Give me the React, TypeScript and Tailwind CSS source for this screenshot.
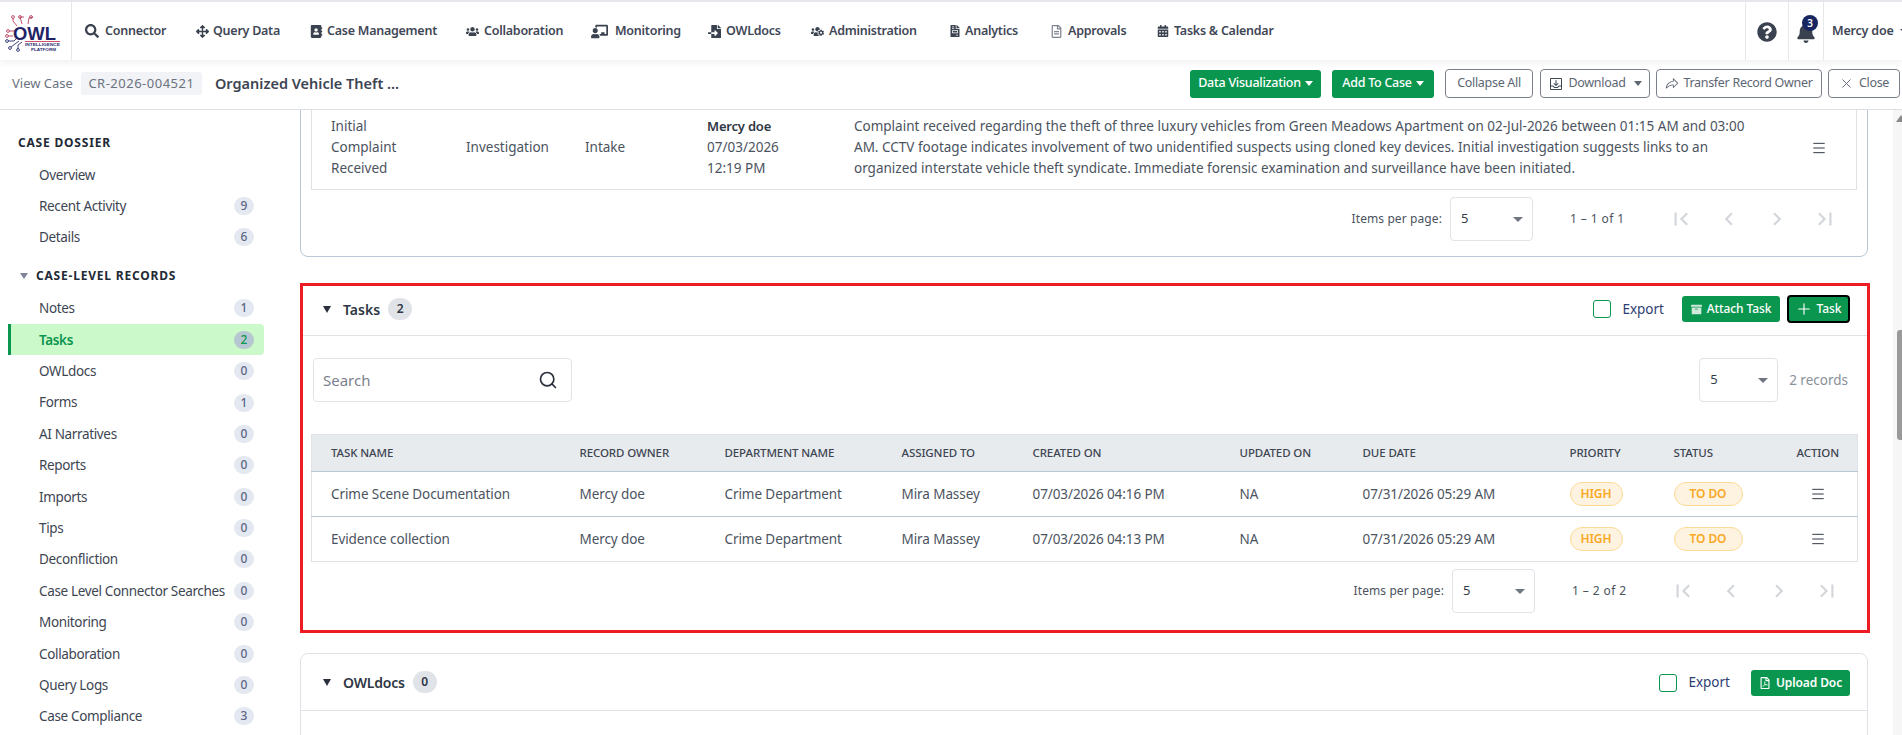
import { Menu, Plus, Search, X } from "lucide-react";
import {
  FaAddressBook,
  FaArchive,
  FaArrowsAlt,
  FaBell,
  FaCalendarAlt,
  FaChalkboardTeacher,
  FaFileImport,
  FaFileInvoice,
  FaQuestionCircle,
  FaRegFileAlt,
  FaRegFilePdf,
  FaSearch,
  FaUsers,
  FaUsersCog,
} from "react-icons/fa";
import { MdChevronLeft, MdChevronRight, MdFirstPage, MdLastPage } from "react-icons/md";
import { PiShareFat, PiTrayArrowDown } from "react-icons/pi";

const navItems = [
  { label: "Connector", icon: FaSearch, width: "w-[110px]", gap: "gap-[6px]", size: 14, tone: "text-[#3a424f]" },
  { label: "Query Data", icon: FaArrowsAlt, width: "w-[114px]", gap: "gap-[4px]", size: 13, tone: "text-[#3a424f]" },
  { label: "Case Management", icon: FaAddressBook, width: "w-[156px]", gap: "gap-[4px]", size: 13, tone: "text-[#3a424f]" },
  { label: "Collaboration", icon: FaUsers, width: "w-[127px]", gap: "gap-[5px]", size: 13, tone: "text-[#3a424f]" },
  { label: "Monitoring", icon: FaChalkboardTeacher, width: "w-[115px]", gap: "gap-[9px]", size: 17, tone: "text-[#3a424f]" },
  { label: "OWLdocs", icon: FaFileImport, width: "w-[103px]", gap: "gap-[5px]", size: 13, tone: "text-[#3a424f]" },
  { label: "Administration", icon: FaUsersCog, width: "w-[138px]", gap: "gap-[5px]", size: 13, tone: "text-[#3a424f]" },
  { label: "Analytics", icon: FaFileInvoice, width: "w-[101px]", gap: "gap-[3px]", size: 12, tone: "text-[#3a424f]" },
  { label: "Approvals", icon: FaRegFileAlt, width: "w-[107px]", gap: "gap-[5px]", size: 13, tone: "text-[#7d8490]" },
  { label: "Tasks & Calendar", icon: FaCalendarAlt, width: "w-[119px]", gap: "gap-[4px]", size: 12, tone: "text-[#3a424f]" },
];

const dossier = [
  { label: "Overview" },
  { label: "Recent Activity", count: 9 },
  { label: "Details", count: 6 },
];

const records = [
  { label: "Notes", count: 1 },
  { label: "Tasks", count: 2, active: true },
  { label: "OWLdocs", count: 0 },
  { label: "Forms", count: 1 },
  { label: "AI Narratives", count: 0 },
  { label: "Reports", count: 0 },
  { label: "Imports", count: 0 },
  { label: "Tips", count: 0 },
  { label: "Deconfliction", count: 0 },
  { label: "Case Level Connector Searches", count: 0 },
  { label: "Monitoring", count: 0 },
  { label: "Collaboration", count: 0 },
  { label: "Query Logs", count: 0 },
  { label: "Case Compliance", count: 3 },
];

const tasks = [
  { name: "Crime Scene Documentation", created: "07/03/2026 04:16 PM" },
  { name: "Evidence collection", created: "07/03/2026 04:13 PM" },
];

const headers = [
  { label: "TASK NAME", width: "w-[249px]" },
  { label: "RECORD OWNER", width: "w-[145px]" },
  { label: "DEPARTMENT NAME", width: "w-[177px]" },
  { label: "ASSIGNED TO", width: "w-[131px]" },
  { label: "CREATED ON", width: "w-[207px]" },
  { label: "UPDATED ON", width: "w-[123px]" },
  { label: "DUE DATE", width: "w-[207px]" },
  { label: "PRIORITY", width: "w-[104px]" },
  { label: "STATUS", width: "w-[124px]" },
];

function Logo() {
  return (
    <svg width="71" height="58" viewBox="0 0 71 58" aria-label="OWL Intelligence Platform">
      <g fill="none" stroke="#b8405e" strokeWidth="0.9">
        <path d="M17 24 L13 19 L13 16 M22 22 L20 15 L24 15 M28 22 L29 16 L33 15 M9 29 L14 29 L16 27 M8 34 L13 34" />
        <circle cx="13" cy="15" r="1.4" />
        <circle cx="20" cy="15" r="1.4" />
        <circle cx="31" cy="15" r="1.4" />
        <circle cx="8" cy="29" r="1.4" />
        <circle cx="7" cy="34" r="1.4" />
      </g>
      <g fill="none" stroke="#2b2f74" strokeWidth="0.9">
        <path d="M8 39 L14 39 L17 36 M11 45 L15 42 L19 39 M18 47 L18 43 L22 40" />
        <circle cx="7" cy="39" r="1.4" />
        <circle cx="10" cy="46" r="1.4" />
        <circle cx="18" cy="48" r="1.4" />
      </g>
      <text x="13" y="38" fontFamily="Liberation Sans" fontWeight="700" fontSize="19" fill="#1f2366" textLength="43" lengthAdjust="spacingAndGlyphs">
        OWL
      </text>
      <path d="M25 39.5 H60" stroke="#d0506a" strokeWidth="1" />
      <text x="25" y="44" fontFamily="Liberation Sans" fontWeight="700" fontSize="4" fill="#2b2f74" textLength="35" lengthAdjust="spacingAndGlyphs">
        INTELLIGENCE
      </text>
      <text x="31" y="48.5" fontFamily="Liberation Sans" fontWeight="700" fontSize="4" fill="#2b2f74" textLength="25" lengthAdjust="spacingAndGlyphs">
        PLATFORM
      </text>
    </svg>
  );
}

function TopNav() {
  return (
    <header className="relative z-10 flex h-[60px] shrink-0 items-center border-t-2 border-[#e5e7eb] bg-white shadow-[0_2px_8px_rgba(0,0,0,0.07)]">
      <div className="flex h-full w-[72px] shrink-0 items-center border-r border-[#e5e7eb]">
        <Logo />
      </div>
      <nav className="flex flex-1 items-center pl-[13px]">
        {navItems.map((item) => (
          <a key={item.label} className={`flex shrink-0 items-center ${item.width} ${item.gap} text-[12.5px] font-semibold tracking-[-0.25px] whitespace-nowrap text-[#3f4756]`}>
            <span className="flex w-[14px] justify-center">
              <item.icon size={item.size} className={`shrink-0 ${item.tone}`} />
            </span>
            {item.label}
          </a>
        ))}
      </nav>
      <div className="flex h-full w-[43px] items-center justify-center border-l border-[#e5e7eb]">
        <FaQuestionCircle size={20} className="mt-[2px] text-[#3a424f]" />
      </div>
      <div className="relative flex h-full w-[35px] items-center justify-center border-l border-[#e5e7eb]">
        <FaBell size={20} className="mt-[3px] text-[#3a424f]" />
        <span className="absolute top-[13px] left-[13px] flex h-[16px] w-[16px] items-center justify-center rounded-full bg-[#17265f] text-[10px] font-semibold text-white">
          3
        </span>
      </div>
      <div className="flex h-full w-[79px] items-center gap-[6px] overflow-hidden border-l border-[#e5e7eb] pl-[8px] text-[12.5px] font-semibold tracking-[-0.2px] whitespace-nowrap text-[#3f4756]">
        Mercy doe
        <span className="h-0 w-0 shrink-0 border-x-[4px] border-t-[4px] border-x-transparent border-t-[#3f4756]" />
      </div>
    </header>
  );
}

function Caret() {
  return <span className="ml-[4px] inline-block h-0 w-0 border-x-[4px] border-t-[5px] border-x-transparent border-t-current" />;
}

function SubBar() {
  const outline = "flex h-[29px] items-center rounded-[4px] border border-[#7a808a] bg-white text-[12.5px] tracking-[-0.3px] whitespace-nowrap text-[#5d6673]";
  const green = "flex h-[28px] items-center justify-center rounded-[3px] bg-[#0b9650] text-[12.5px] font-medium tracking-[-0.25px] whitespace-nowrap text-white";
  return (
    <div className="flex h-[50px] shrink-0 items-center border-b border-[#dcdfe3] bg-white pr-[2px] pb-[2px] pl-[12px]">
      <span className="text-[13px] text-[#6b7280]">View Case</span>
      <span className="ml-[8px] flex h-[23px] w-[121px] items-center justify-center rounded-[3px] bg-[#f1f3f6] text-[13px] tracking-[0.5px] text-[#6b7280]">
        CR-2026-004521
      </span>
      <span className="ml-[13px] text-[14.5px] font-semibold text-[#3d4552]">Organized Vehicle Theft ...</span>
      <div className="ml-auto flex items-center">
        <button className={`${green} w-[131px]`}>
          Data Visualization
          <Caret />
        </button>
        <button className={`${green} ml-[11px] w-[102px]`}>
          Add To Case
          <Caret />
        </button>
        <button className={`${outline} ml-[11px] w-[88px] justify-center`}>Collapse All</button>
        <button className={`${outline} ml-[7px] w-[110px] justify-center gap-[4px]`}>
          <PiTrayArrowDown size={16} className="text-[#3f4756]" />
          Download
          <Caret />
        </button>
        <button className={`${outline} ml-[6px] w-[166px] justify-center gap-[4px]`}>
          <PiShareFat size={14} />
          Transfer Record Owner
        </button>
        <button className={`${outline} ml-[6px] w-[72px] justify-center gap-[5px]`}>
          <X size={15} strokeWidth={1.5} />
          Close
        </button>
      </div>
    </div>
  );
}

function SideRow({ label, count, active }: { label: string; count?: number; active?: boolean }) {
  return (
    <div
      className={`ml-[8px] flex h-[31.4px] w-[256px] items-center justify-between border-l-[3px] pr-[10px] pl-[28px] text-[13.5px] tracking-[-0.35px] whitespace-nowrap ${
        active ? "rounded-r-[4px] border-[#0b9650] bg-[#ccf9c9] font-semibold text-[#0b9650]" : "border-transparent text-[#3d4552]"
      }`}
    >
      {label}
      {count !== undefined && (
        <span
          className={`flex h-[18px] w-[20px] items-center justify-center rounded-full text-[12px] font-medium tracking-normal ${
            active ? "bg-[#b7c7d1] text-[#0b9650]" : "bg-[#e4e8f1] text-[#5b6785]"
          }`}
        >
          {count}
        </span>
      )}
    </div>
  );
}

function Sidebar() {
  return (
    <aside className="w-[300px] shrink-0 overflow-hidden bg-white pt-[24px]">
      <div className="flex h-[18px] items-center pl-[18px] text-[12px] font-bold tracking-[0.8px] text-[#222a36]">CASE DOSSIER</div>
      <div className="mt-[7px]">
        {dossier.map((row) => (
          <SideRow key={row.label} {...row} />
        ))}
      </div>
      <div className="mt-[13.5px] flex h-[18px] items-center pl-[20px] text-[12px] font-bold tracking-[0.8px] text-[#222a36]">
        <span className="mr-[8px] h-0 w-0 border-x-[4px] border-t-[6px] border-x-transparent border-t-[#7d8596]" />
        CASE-LEVEL RECORDS
      </div>
      <div className="mt-[8px]">
        {records.map((row) => (
          <SideRow key={row.label} {...row} />
        ))}
      </div>
    </aside>
  );
}

function PageSelect({ width }: { width: string }) {
  return (
    <div className={`flex h-[44px] ${width} items-center justify-between rounded-[4px] border border-[#e0e3e8] bg-white pr-[9px] pl-[10px] text-[13px] text-[#333b47]`}>
      5
      <span className="h-0 w-0 border-x-[5px] border-t-[5px] border-x-transparent border-t-[#6f7681]" />
    </div>
  );
}

function Pagination({ range }: { range: string }) {
  const icons = [MdFirstPage, MdChevronLeft, MdChevronRight, MdLastPage];
  return (
    <div className="mt-[7px] flex items-center justify-end pr-[8px]">
      <span className="mr-[8px] text-[12px] tracking-[0.1px] text-[#4b5360]">Items per page:</span>
      <PageSelect width="w-[83px]" />
      <span className="ml-[37px] w-[87px] text-[12px] tracking-[0.4px] text-[#4b5360]">{range}</span>
      {icons.map((Icon, i) => (
        <span key={i} className="flex w-[48px] justify-center text-[#d3d6da]">
          <Icon size={26} />
        </span>
      ))}
    </div>
  );
}

function ExportToggle() {
  return (
    <label className="flex items-center gap-[11px] text-[13.5px] text-[#2f3f73]">
      <span className="h-[18px] w-[18px] rounded-[3px] border border-[#0b9650] bg-white" />
      Export
    </label>
  );
}

function CardHeader({ title, count, children }: { title: string; count: number; children: React.ReactNode }) {
  return (
    <div className="flex h-[50px] items-center border-b border-[#dfe2e6] pr-[17px] pb-[3px] pl-[20px]">
      <span className="h-0 w-0 border-x-[4px] border-t-[7px] border-x-transparent border-t-[#2a313c]" />
      <span className="ml-[12px] text-[14px] font-semibold text-[#2f3744]">{title}</span>
      <span className="ml-[8px] flex h-[22px] w-[24px] items-center justify-center rounded-full bg-[#e0e3e8] text-[12px] font-semibold text-[#2f3744]">
        {count}
      </span>
      <div className="ml-auto flex items-center">{children}</div>
    </div>
  );
}

function TasksTable() {
  return (
    <table className="w-[1546px] table-fixed border-collapse text-[13.5px] tracking-[-0.08px] text-[#4b5360]">
      <thead>
        <tr className="h-[37px] border border-[#e0e3e8] border-b-[#b7c7d6] bg-[#e8ebee] text-left text-[11.5px] tracking-[-0.1px] text-[#3d4552]">
          {headers.map((h) => (
            <th key={h.label} className={`${h.width} pl-[19px] font-medium`}>
              {h.label}
            </th>
          ))}
          <th className="w-[79px] text-center font-medium">ACTION</th>
        </tr>
      </thead>
      <tbody>
        {tasks.map((t, i) => (
          <tr key={t.name} className={`h-[45px] border-x border-[#dfe3e8] ${i === 0 ? "border-b border-b-[#b7c7d6]" : "border-b border-b-[#dfe3e8]"}`}>
            <td className="pl-[19px] whitespace-nowrap">{t.name}</td>
            <td className="pl-[19px]">Mercy doe</td>
            <td className="pl-[19px]">Crime Department</td>
            <td className="pl-[19px]">Mira Massey</td>
            <td className="pl-[19px]">{t.created}</td>
            <td className="pl-[19px]">NA</td>
            <td className="pl-[19px]">07/31/2026 05:29 AM</td>
            <td className="pl-[19px]">
              <span className="flex h-[24px] w-[53px] items-center justify-center rounded-full border border-[#fcdc94] bg-[#fdf3e0] text-[12px] font-semibold text-[#f9a825]">
                HIGH
              </span>
            </td>
            <td className="pl-[19px]">
              <span className="flex h-[24px] w-[69px] items-center justify-center rounded-full border border-[#fcdc94] bg-[#fdf3e0] text-[12px] font-semibold text-[#f9a825]">
                TO DO
              </span>
            </td>
            <td>
              <Menu size={16} strokeWidth={1.5} className="mx-auto text-[#333b47]" />
            </td>
          </tr>
        ))}
      </tbody>
    </table>
  );
}

function MainContent() {
  return (
    <main className="h-[625px] flex-1 overflow-hidden pr-[32px]">
      {/* the panel is scrolled: its top edge sits above the fold */}
      <section className="mt-[-20px] w-[1568px] rounded-lg border border-[#b9c7d6] bg-white px-[10px] pt-[15px] pb-[15px]">
        <div className="flex h-[84px] items-center border-x border-b border-[#dfe3e8] text-[13.5px] leading-[21px] text-[#4b5360]">
          <div className="w-[154px] pl-[19px]">
            Initial
            <br />
            Complaint
            <br />
            Received
          </div>
          <div className="w-[119px]">Investigation</div>
          <div className="w-[122px]">Intake</div>
          <div className="w-[147px]">
            <span className="text-[13px] font-semibold tracking-[-0.2px] text-[#2f3744]">Mercy doe</span>
            <br />
            07/03/2026
            <br />
            12:19 PM
          </div>
          <div className="w-[925px] whitespace-nowrap">
            Complaint received regarding the theft of three luxury vehicles from Green Meadows Apartment on 02-Jul-2026 between 01:15 AM and 03:00
            <br />
            AM. CCTV footage indicates involvement of two unidentified suspects using cloned key devices. Initial investigation suggests links to an
            <br />
            organized interstate vehicle theft syndicate. Immediate forensic examination and surveillance have been initiated.
          </div>
          <Menu size={16} strokeWidth={1.5} className="ml-[32px] text-[#333b47]" />
        </div>
        <Pagination range="1 – 1 of 1" />
      </section>

      <section className="mt-[26px] h-[350px] w-[1570px] border-[3px] border-[#ed1c24] bg-white">
        <CardHeader title="Tasks" count={2}>
          <ExportToggle />
          <button className="ml-[18px] flex h-[26px] w-[98px] items-center justify-center gap-[5px] rounded-[3px] bg-[#0b9650] text-[12px] font-medium tracking-[-0.1px] text-white">
            <FaArchive size={11} className="text-[#cfe9da]" />
            Attach Task
          </button>
          <button className="ml-[7px] flex h-[28px] w-[63px] items-center justify-center gap-[3px] rounded-[4px] border-2 border-black bg-[#0b9650] text-[12px] font-medium text-white">
            <Plus size={18} strokeWidth={1.5} />
            Task
          </button>
        </CardHeader>
        <div className="px-[8px]">
          <div className="mt-[22px] flex items-center">
            <div className="ml-[2px] flex h-[44px] w-[259px] items-center justify-between rounded-[4px] border border-[#e0e3e8] pr-[13px] pl-[9px] text-[15px] text-[#7b828d]">
              Search
              <Search size={20} strokeWidth={2} className="text-[#2a313c]" />
            </div>
            <div className="ml-auto flex items-center">
              <PageSelect width="w-[79px]" />
              <span className="mr-[11px] ml-[11px] text-[13.5px] text-[#8a9099]">2 records</span>
            </div>
          </div>
          <div className="mt-[32px]">
            <TasksTable />
          </div>
          <Pagination range="1 – 2 of 2" />
        </div>
      </section>

      <section className="mt-[20px] w-[1568px] rounded-t-lg border border-[#dfe2e6] bg-white">
        <div className="flex h-[57px] items-center border-b border-[#dfe2e6] pr-[17px] pl-[22px]">
          <span className="h-0 w-0 border-x-[4px] border-t-[7px] border-x-transparent border-t-[#2a313c]" />
          <span className="ml-[12px] text-[14px] font-semibold tracking-[-0.2px] text-[#2f3744]">OWLdocs</span>
          <span className="ml-[8px] flex h-[22px] w-[24px] items-center justify-center rounded-full bg-[#e0e3e8] text-[12px] font-semibold text-[#2f3744]">
            0
          </span>
          <div className="ml-auto flex items-center pt-[1px]">
            <ExportToggle />
            <button className="ml-[21px] flex h-[26px] w-[99px] items-center justify-center gap-[5px] rounded-[3px] bg-[#0b9650] text-[12px] font-semibold tracking-[-0.1px] text-white">
              <FaRegFilePdf size={12} />
              Upload Doc
            </button>
          </div>
        </div>
        <div className="h-[40px]" />
      </section>
    </main>
  );
}

export default function App() {
  return (
    <div className="relative flex h-[735px] w-[1902px] flex-col overflow-hidden bg-white font-['Noto_Sans',sans-serif]">
      <TopNav />
      <SubBar />
      <div className="flex min-h-0 flex-1">
        <Sidebar />
        <MainContent />
      </div>
      {/* page scrollbar, clipped at the window edge */}
      <div className="absolute top-[110px] right-0 bottom-0 w-[9px] bg-[#f6f6f6]">
        <span className="absolute top-[5px] left-[3px] h-0 w-0 border-x-[5px] border-b-[7px] border-x-transparent border-b-[#8a8a8a]" />
        <span className="absolute top-[220px] left-[4px] h-[110px] w-[5px] rounded-l-[3px] bg-[#9a9a9a]" />
      </div>
    </div>
  );
}
